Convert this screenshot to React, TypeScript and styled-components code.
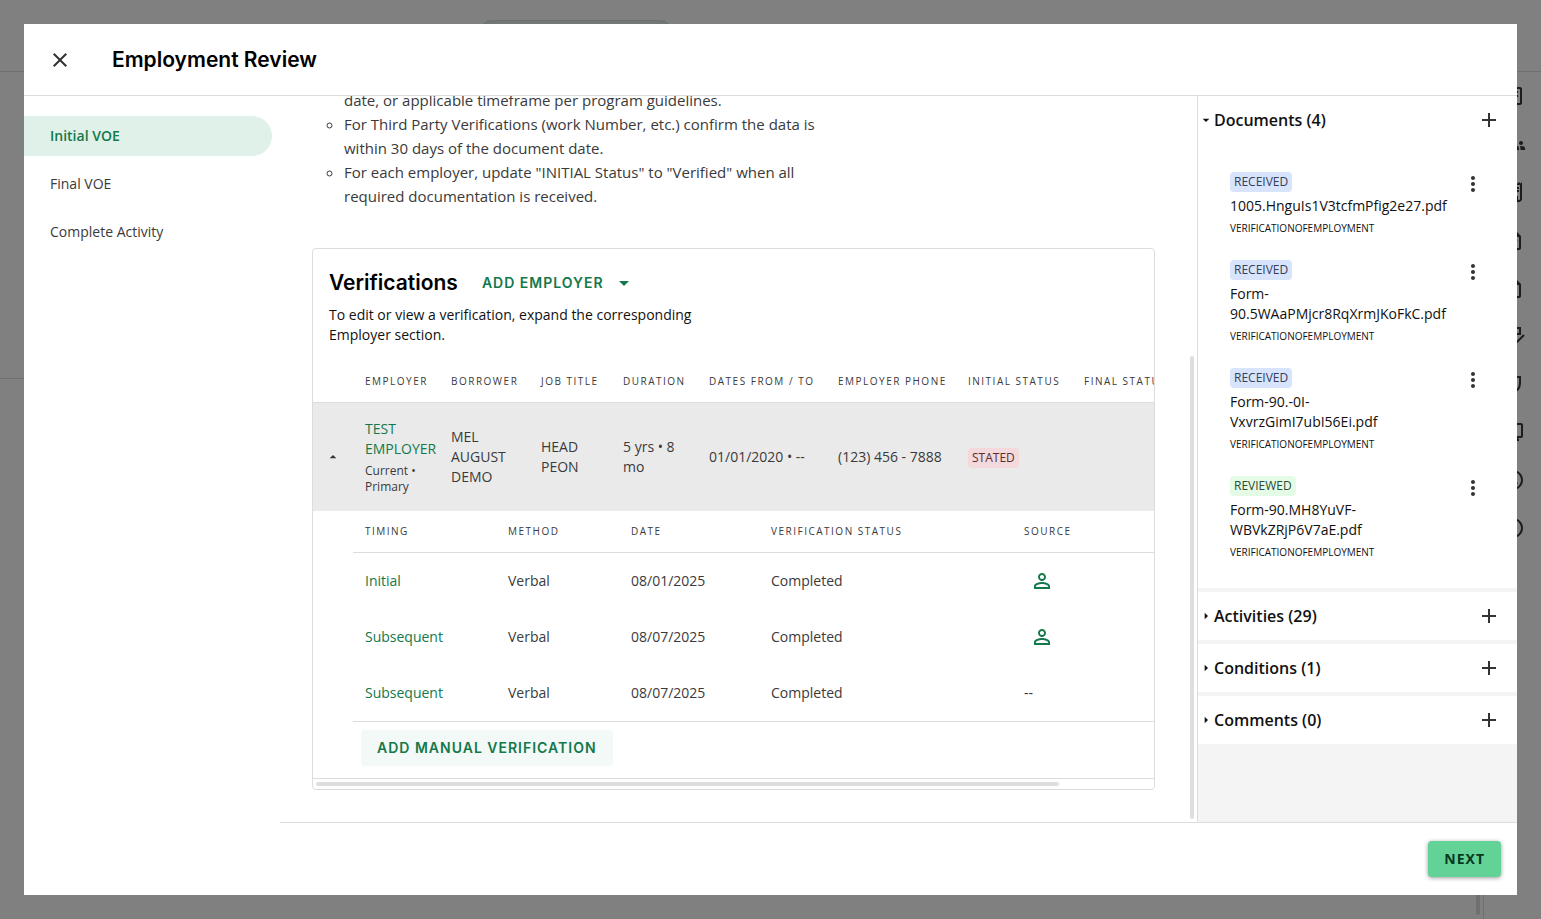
import React from "react";
import styled, { createGlobalStyle } from "styled-components";
import {
  MdAdd, MdArrowDropDown, MdArrowDropUp, MdArrowRight, MdClose, MdMoreVert, MdPersonOutline,
  MdOutlineArticle, MdOutlineTask, MdGroups, MdOutlineReceiptLong,
  MdOutlineAccessTime, MdOutlineInfo, MdOutlineDescription, MdOutlineMonitor,
} from "react-icons/md";

const textFont = `"Open Sans", "Noto Sans", sans-serif`;
const displayFont = `Inter, "Open Sans", sans-serif`;
const line = "#dcdcdc";
const green = "#13784a";

const GlobalStyle = createGlobalStyle`
  *, *::before, *::after { box-sizing: border-box; }
  html, body, #root { height: 100%; }
  body { margin: 0; overflow: hidden; font: 400 14px/20px ${textFont}; color: #3a3a3a; background: #fff; }
  button { font: inherit; color: inherit; background: none; border: 0; padding: 0; cursor: pointer; }
  h1, h2, h3, p, ul { margin: 0; padding: 0; }
  a { color: ${green}; text-decoration: none; }
  table { border-collapse: separate; border-spacing: 0; table-layout: fixed; }
`;

/* Page behind the dialog */
const Backpage = styled.div`
  height: 100%;
  display: flex;
  flex-direction: column;
  background: #808080;
`;
const BackBar = styled.div`
  flex: none;
  height: 72px;
  padding: 20px 480px;
  border-bottom: 1px solid #6f6f6f;
`;
const BackSearch = styled.div`
  width: 192px;
  height: 40px;
  border-radius: 12px;
  border: 1px solid #6a706d;
  background: #737775;
`;
const BackBody = styled.div`
  flex: 1;
  display: flex;
  min-height: 0;
`;
const BackLeft = styled.div`
  width: 24px;
  height: 307px;
  border-bottom: 1px solid #6f6f6f;
`;
const BackScroll = styled.div`
  flex: 1;
  display: flex;
  justify-content: flex-end;
  padding: 0 3px 4px 0;
`;
const BackThumb = styled.div`
  width: 4px;
  border-radius: 2px;
  background: #707070;
`;
const Rail = styled.div`
  width: 58px;
  display: flex;
  flex-direction: column;
  align-items: center;
  gap: 24px;
  padding-top: 12px;
  border-left: 1px solid #6f6f6f;
  color: #1c1c1c;
  font-size: 24px;
`;

/* Dialog */
const Dialog = styled.div`
  position: fixed;
  inset: 24px;
  display: flex;
  flex-direction: column;
  background: #fff;
`;
const Header = styled.header`
  flex: none;
  display: flex;
  align-items: center;
  gap: 40px;
  height: 72px;
  padding: 0 24px;
  border-bottom: 1px solid ${line};
`;
const IconButton = styled.button`
  flex: none;
  width: 24px;
  height: 24px;
  font-size: 24px;
  line-height: 0;
  color: #333;
`;
const Title = styled.h1`
  font: 600 21px/36px ${displayFont};
  color: #000;
`;
const Columns = styled.div`
  flex: 1;
  display: flex;
  min-height: 0;
`;
const Nav = styled.nav`
  flex: none;
  width: 256px;
  display: flex;
  flex-direction: column;
  gap: 8px;
  padding: 20px 8px 0 0;
`;
const NavItem = styled.a<{ $active?: boolean }>`
  padding: 10px 26px;
  border-radius: 0 20px 20px 0;
  color: ${(p) => (p.$active ? green : "#3a3a3a")};
  background: ${(p) => (p.$active ? "#dff1e8" : "none")};
  font-weight: ${(p) => (p.$active ? 600 : 400)};
`;
const Work = styled.div`
  flex: 1;
  min-width: 0;
  display: flex;
  flex-direction: column;
`;
const Panels = styled.div`
  flex: 1;
  display: flex;
  min-height: 0;
`;
const Main = styled.main`
  flex: 1;
  min-width: 0;
  display: flex;
  flex-direction: column;
  justify-content: flex-end;
  overflow: hidden;
  padding: 0 35px 32px 32px;
`;
const VerticalRail = styled.div`
  flex: none;
  width: 7px;
  display: flex;
  flex-direction: column;
  justify-content: flex-end;
  padding: 0 3px 3px 0;
`;
const VerticalThumb = styled.div`
  height: 64%;
  border-radius: 2px;
  background: #dedede;
`;
const Guide = styled.ul`
  flex: none;
  width: 520px;
  padding-left: 32px;
  margin-bottom: 40px;
  list-style: circle;
  font-size: 15px;
  line-height: 24px;
`;
const GuideItem = styled.li<{ $continued?: boolean }>`
  list-style: ${(p) => (p.$continued ? "none" : "circle")};
`;
const Card = styled.section`
  flex: none;
  border: 1px solid ${line};
  border-radius: 4px;
`;
const CardHead = styled.div`
  padding: 16px;
`;
const CardTitleRow = styled.div`
  display: flex;
  align-items: center;
  gap: 24px;
  margin-bottom: 4px;
`;
const CardTitle = styled.h2`
  font: 600 21px/36px ${displayFont};
  color: #000;
`;
const AddEmployer = styled.button`
  display: flex;
  align-items: center;
  gap: 8px;
  font: 600 14px/20px ${displayFont};
  letter-spacing: 1px;
  color: ${green};
`;
const CardText = styled.p`
  max-width: 400px;
  color: #111;
`;
const TableView = styled.div`
  overflow: hidden;
`;
const EmployerTable = styled.table`
  width: 950px;
`;
const Th = styled.th`
  padding: 0 8px 2px;
  height: 42px;
  border-bottom: 1px solid ${line};
  font-size: 10px;
  font-weight: 500;
  letter-spacing: 1.5px;
  text-align: left;
  white-space: nowrap;
`;
const Td = styled.td`
  padding: 16px 0 16px 8px;
  height: 108px;
  background: #eaeaea;
`;
const ToggleCell = styled(Td)`
  padding: 0 8px 0 12px;
`;
const ToggleButton = styled(IconButton)`
  display: block;
  width: 16px;
  height: 16px;
  font-size: 16px;
`;
const EmployerNote = styled.div`
  margin-top: 4px;
  font-size: 12px;
  line-height: 16px;
`;
const NestedCell = styled.td`
  padding: 0 0 0 40px;
`;
const NestedTable = styled.table`
  width: 100%;
`;
const NestedTh = styled(Th)`
  padding: 0 12px 2px;
`;
const NestedTd = styled.td`
  padding: 0 12px;
  height: 56px;
`;
const SourceIcon = styled(MdPersonOutline)`
  display: block;
  margin-left: 6px;
  font-size: 24px;
  color: ${green};
`;
const AddRow = styled.div`
  padding: 8px 8px 12px;
  border-top: 1px solid ${line};
`;
const AddManual = styled.button`
  display: block;
  height: 36px;
  padding: 0 16px;
  border-radius: 4px;
  background: #f3f9f7;
  color: ${green};
  font: 600 14px/20px ${displayFont};
  letter-spacing: 1px;
`;
const HorizontalRail = styled.div`
  height: 11px;
  padding: 3px;
  border-top: 1px solid ${line};
`;
const HorizontalThumb = styled.div`
  width: 89%;
  height: 4px;
  border-radius: 2px;
  background: #dedede;
`;

const badgeColors = {
  received: ["#d8e4fb", "#33415c"],
  reviewed: ["#e4fbe6", "#2f4a35"],
  stated: ["#f3d9db", "#5a2d30"],
} as const;
type BadgeKind = keyof typeof badgeColors;
const Badge = styled.span<{ $kind: BadgeKind }>`
  display: inline-block;
  padding: 0 4px;
  border-radius: 4px;
  font-size: 12px;
  line-height: 20px;
  background: ${(p) => badgeColors[p.$kind][0]};
  color: ${(p) => badgeColors[p.$kind][1]};
`;

const Side = styled.aside`
  flex: none;
  width: 320px;
  display: flex;
  flex-direction: column;
  gap: 4px;
  border-left: 1px solid ${line};
  background: #f4f4f4;
  overflow: hidden;
`;
const Section = styled.section`
  background: #fff;
`;
const SectionHead = styled.div`
  display: flex;
  align-items: center;
  justify-content: space-between;
  height: 48px;
  padding-right: 16px;
`;
const SectionToggle = styled.button`
  display: flex;
  align-items: center;
  font-size: 16px;
  font-weight: 600;
  color: #111;
`;
const DocumentList = styled.ul`
  display: flex;
  flex-direction: column;
  gap: 24px;
  padding: 28px 32px;
  list-style: none;
`;
const DocumentItem = styled.li`
  display: flex;
  justify-content: space-between;
  color: #111;
`;
const DocumentInfo = styled.div`
  width: 220px;
  display: flex;
  flex-direction: column;
  align-items: flex-start;
  gap: 4px;
`;
const DocumentType = styled.div`
  font-size: 10px;
  line-height: 16px;
`;
const Footer = styled.footer`
  flex: none;
  display: flex;
  align-items: center;
  justify-content: flex-end;
  height: 73px;
  padding: 0 16px;
  border-top: 1px solid ${line};
`;
const NextButton = styled.button`
  height: 36px;
  padding: 0 16px;
  border-radius: 4px;
  background: #63d297;
  box-shadow: 0 1px 4px rgba(0, 0, 0, 0.4);
  color: #06381f;
  font-weight: 700;
  letter-spacing: 1px;
`;

const employerColumns: [string, number][] = [
  ["", 44], ["EMPLOYER", 86], ["BORROWER", 90], ["JOB TITLE", 82], ["DURATION", 86],
  ["DATES FROM / TO", 129], ["EMPLOYER PHONE", 130], ["INITIAL STATUS", 116], ["FINAL STATUS", 187],
];
const verificationColumns: [string, number][] = [
  ["TIMING", 143], ["METHOD", 123], ["DATE", 140], ["VERIFICATION STATUS", 253], ["SOURCE", 251],
];
const verifications = [
  { timing: "Initial", date: "08/01/2025", person: true },
  { timing: "Subsequent", date: "08/07/2025", person: true },
  { timing: "Subsequent", date: "08/07/2025", person: false },
];
const documents: { status: BadgeKind; name: string }[] = [
  { status: "received", name: "1005.HnguIs1V3tcfmPfig2e27.pdf" },
  { status: "received", name: "Form-90.5WAaPMjcr8RqXrmJKoFkC.pdf" },
  { status: "received", name: "Form-90.-0I-VxvrzGimI7ubI56Ei.pdf" },
  { status: "reviewed", name: "Form-90.MH8YuVF-WBVkZRjP6V7aE.pdf" },
];
const closedSections = ["Activities (29)", "Conditions (1)", "Comments (0)"];

const RailIcon = ({ d }: { d: string }) => (
  <svg width="24" height="24" viewBox="0 0 24 24" fill="none" stroke="currentColor" strokeWidth="2">
    <path d={d} />
  </svg>
);

function Verifications() {
  return (
    <NestedTable>
      <colgroup>{verificationColumns.map(([label, width]) => <col key={label} width={width} />)}</colgroup>
      <thead>
        <tr>{verificationColumns.map(([label]) => <NestedTh key={label}>{label}</NestedTh>)}</tr>
      </thead>
      <tbody>
        {verifications.map((v, i) => (
          <tr key={i}>
            <NestedTd><a href="#verification">{v.timing}</a></NestedTd>
            <NestedTd>Verbal</NestedTd>
            <NestedTd>{v.date}</NestedTd>
            <NestedTd>Completed</NestedTd>
            <NestedTd>{v.person ? <SourceIcon /> : "--"}</NestedTd>
          </tr>
        ))}
      </tbody>
    </NestedTable>
  );
}

export default function App() {
  return (
    <>
      <GlobalStyle />
      <Backpage aria-hidden="true">
        <BackBar><BackSearch /></BackBar>
        <BackBody>
          <BackLeft />
          <BackScroll><BackThumb /></BackScroll>
          <Rail>
            <MdOutlineArticle />
            <MdGroups />
            <MdOutlineReceiptLong />
            <MdOutlineTask />
            <MdOutlineDescription />
            <RailIcon d="M10 20H5V4h14v6h-4M10 15l5 4 8-8" />
            <RailIcon d="M5 5h14v6c0 5-3 8-7 9-4-1-7-4-7-9z" />
            <MdOutlineMonitor />
            <MdOutlineAccessTime />
            <MdOutlineInfo />
          </Rail>
        </BackBody>
      </Backpage>
      <Dialog role="dialog" aria-labelledby="dialog-title">
        <Header>
          <IconButton aria-label="Close"><MdClose /></IconButton>
          <Title id="dialog-title">Employment Review</Title>
        </Header>
        <Columns>
          <Nav>
            <NavItem href="#initial" $active>Initial VOE</NavItem>
            <NavItem href="#final">Final VOE</NavItem>
            <NavItem href="#complete">Complete Activity</NavItem>
          </Nav>
          <Work>
            <Panels>
              <Main>
                <Guide>
                  <GuideItem $continued>date, or applicable timeframe per program guidelines.</GuideItem>
                  <GuideItem>For Third Party Verifications (work Number, etc.) confirm the data is within 30 days of the document date.</GuideItem>
                  <GuideItem>For each employer, update "INITIAL Status" to "Verified" when all required documentation is received.</GuideItem>
                </Guide>
                <Card>
                  <CardHead>
                    <CardTitleRow>
                      <CardTitle>Verifications</CardTitle>
                      <AddEmployer>ADD EMPLOYER<MdArrowDropDown size={24} /></AddEmployer>
                    </CardTitleRow>
                    <CardText>To edit or view a verification, expand the corresponding Employer section.</CardText>
                  </CardHead>
                  <TableView>
                    <EmployerTable>
                      <colgroup>{employerColumns.map(([label, width]) => <col key={label} width={width} />)}</colgroup>
                      <thead>
                        <tr>{employerColumns.map(([label]) => <Th key={label}>{label}</Th>)}</tr>
                      </thead>
                      <tbody>
                        <tr>
                          <ToggleCell><ToggleButton aria-label="Collapse"><MdArrowDropUp /></ToggleButton></ToggleCell>
                          <Td>
                            <a href="#employer">TEST EMPLOYER</a>
                            <EmployerNote>Current • Primary</EmployerNote>
                          </Td>
                          <Td>MEL AUGUST DEMO</Td>
                          <Td>HEAD<br />PEON</Td>
                          <Td>5 yrs • 8<br />mo</Td>
                          <Td>01/01/2020 • --</Td>
                          <Td>(123) 456 - 7888</Td>
                          <Td><Badge $kind="stated">STATED</Badge></Td>
                          <Td />
                        </tr>
                        <tr>
                          <NestedCell colSpan={9}>
                            <Verifications />
                            <AddRow><AddManual>ADD MANUAL VERIFICATION</AddManual></AddRow>
                          </NestedCell>
                        </tr>
                      </tbody>
                    </EmployerTable>
                  </TableView>
                  <HorizontalRail><HorizontalThumb /></HorizontalRail>
                </Card>
              </Main>
              <VerticalRail><VerticalThumb /></VerticalRail>
              <Side>
                <Section>
                  <SectionHead>
                    <SectionToggle><MdArrowDropDown />Documents (4)</SectionToggle>
                    <IconButton aria-label="Add document"><MdAdd /></IconButton>
                  </SectionHead>
                  <DocumentList>
                    {documents.map((d) => (
                      <DocumentItem key={d.name}>
                        <DocumentInfo>
                          <Badge $kind={d.status}>{d.status.toUpperCase()}</Badge>
                          <div>{d.name}</div>
                          <DocumentType>VERIFICATIONOFEMPLOYMENT</DocumentType>
                        </DocumentInfo>
                        <IconButton aria-label="More"><MdMoreVert /></IconButton>
                      </DocumentItem>
                    ))}
                  </DocumentList>
                </Section>
                {closedSections.map((label) => (
                  <Section key={label}>
                    <SectionHead>
                      <SectionToggle><MdArrowRight />{label}</SectionToggle>
                      <IconButton aria-label="Add"><MdAdd /></IconButton>
                    </SectionHead>
                  </Section>
                ))}
              </Side>
            </Panels>
            <Footer><NextButton>NEXT</NextButton></Footer>
          </Work>
        </Columns>
      </Dialog>
    </>
  );
}
